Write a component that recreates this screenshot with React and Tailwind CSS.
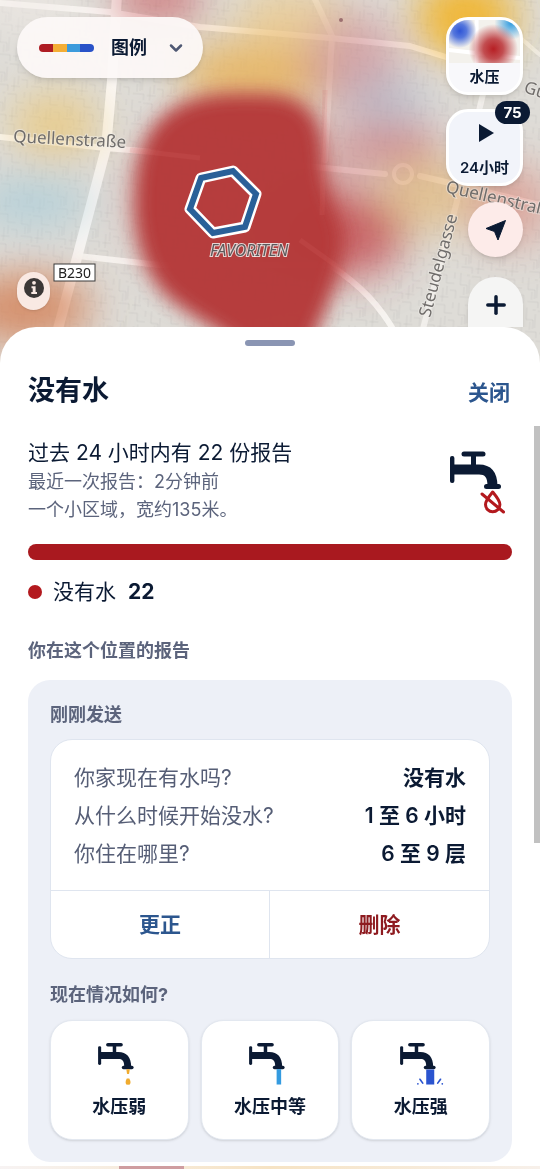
import React from 'react';
import { ChevronDown, Plus } from 'lucide-react';

const ANSWERS = [
  { question: '你家现在有水吗?', answer: '没有水' },
  { question: '从什么时候开始没水?', answer: '1 至 6 小时' },
  { question: '你住在哪里?', answer: '6 至 9 层' },
];

const PRESSURES = [
  { level: 'weak', label: '水压弱' },
  { level: 'medium', label: '水压中等' },
  { level: 'strong', label: '水压强' },
];

/**
 * Water tap with the flow that matches the reported level.
 *
 * @param {string} level - 'none', 'weak', 'medium' or 'strong'
 */
function TapIcon({ level, className }) {
  return (
    <svg viewBox="0 0 64 66" className={className} aria-hidden="true">
      <g fill="#0b1a33">
        <rect x="2" y="6" width="4.4" height="27" rx="2" />
        <rect x="13.5" y="1.5" width="24" height="5" rx="2.5" />
        <rect x="23" y="5" width="5" height="11" />
        <path d="M5 14.5H31C43 14.5 49.5 22 49.5 36H39.5C39.5 27 37 24.5 31 24.5H5Z" />
        <rect x="36" y="34" width="17" height="5" rx="2.5" />
      </g>
      {level === 'none' && (
        <g fill="none" stroke="#b3191e" strokeWidth="3" strokeLinecap="round" strokeLinejoin="round">
          <path d="M44.7 42C41 46.5 37.5 50.5 37.5 54.5a7.2 7.2 0 0 0 14.4 0C51.9 50.5 48.4 46.5 44.7 42Z" />
          <path d="M34 44L55.5 62" />
        </g>
      )}
      {level === 'weak' && (
        <g fill="#f0ab2e">
          <path d="M42.5 39h5l-1 6.5q-1.5 1-3 0Z" />
          <path d="M43.2 52.5h3.6q1.7 3 1.700 5.800q0 3.200-3.500 3.200t-3.500-3.200q0-2.800 1.700-5.800Z" />
        </g>
      )}
      {level === 'medium' && <rect x="41.5" y="39" width="6.5" height="22" fill="#349be0" />}
      {level === 'strong' && (
        <g fill="#2b54cf" stroke="#2b54cf" strokeLinecap="round">
          <rect x="39.5" y="39.5" width="11.5" height="21.5" stroke="none" />
          <path d="M30.5 53.5l4 5.5M60 53.5l-4 5.5M27.5 60h.1M62.5 60h.1" strokeWidth="2.4" />
        </g>
      )}
    </svg>
  );
}

function HeatMap() {
  return (
    <svg
      viewBox="0 0 540 400"
      preserveAspectRatio="xMidYMin slice"
      className="absolute inset-x-0 top-0 h-[400px] w-full"
      aria-hidden="true"
    >
      <defs>
        <filter id="soft" x="-50%" y="-50%" width="200%" height="200%">
          <feGaussianBlur stdDeviation="20" />
        </filter>
        <filter id="edge" x="-30%" y="-30%" width="160%" height="160%">
          <feGaussianBlur stdDeviation="9" />
        </filter>
        <pattern id="blocks" width="34" height="30" patternUnits="userSpaceOnUse" patternTransform="rotate(4)">
          <path
            d="M3 0v12h7v9M14 3h9v8h8M20 16v14M3 24h11v6M27 18h6v8M9 2h3M17 25h9M31 0v6M7 14v8M12 6v14M24 14v9"
            fill="none"
            stroke="#8d8c86"
            strokeWidth="1"
            opacity="0.14"
          />
        </pattern>
      </defs>

      <rect width="540" height="400" fill="#dedcd7" />
      <rect width="540" height="400" fill="url(#blocks)" />

      <g fill="none" stroke="#faf7f4" strokeLinecap="round" strokeLinejoin="round">
        <path d="M0 3L110 12L200 27L330 38L410 46L446 57" strokeWidth="6" />
        <path d="M117 -5L112 80L106 148L78 254L55 340" strokeWidth="10" />
        <path d="M0 137L106 148L250 160L325 168L385 174" strokeWidth="6" />
        <path d="M420 176L450 183L540 205" strokeWidth="6" />
        <path d="M313 -5L332 36L325 160" strokeWidth="6" opacity="0.7" />
        <path d="M78 256L160 265L330 265C360 285 380 305 397 336" strokeWidth="6" opacity="0.9" />
        <path d="M484 90L456 205L420 340" strokeWidth="6" opacity="0.7" />
        <path d="M500 20L540 55" strokeWidth="4" opacity="0.6" />
        <circle cx="403" cy="174" r="9" strokeWidth="4" />
      </g>

      <g filter="url(#soft)">
        <ellipse cx="158" cy="0" rx="48" ry="22" fill="#c8555c" opacity="0.75" />
        <ellipse cx="30" cy="5" rx="55" ry="28" fill="#efe9e6" opacity="0.7" />
        <ellipse cx="255" cy="75" rx="75" ry="36" fill="#e8b052" opacity="0.8" />
        <ellipse cx="290" cy="15" rx="55" ry="28" fill="#ecc98a" opacity="0.75" />
        <ellipse cx="466" cy="18" rx="50" ry="42" fill="#f1b42c" opacity="0.95" />
        <ellipse cx="352" cy="62" rx="48" ry="50" fill="#cd838a" opacity="0.6" />
        <ellipse cx="388" cy="100" rx="42" ry="22" fill="#a9b3ca" opacity="0.65" />
        <ellipse cx="388" cy="146" rx="55" ry="24" fill="#c9777b" opacity="0.75" />
        <ellipse cx="430" cy="195" rx="50" ry="36" fill="#e4b670" opacity="0.65" />
        <ellipse cx="510" cy="205" rx="42" ry="42" fill="#d98376" opacity="0.6" />
        <ellipse cx="55" cy="125" rx="45" ry="34" fill="#edc56a" opacity="0.65" />
        <ellipse cx="32" cy="202" rx="60" ry="26" fill="#aaccd8" opacity="0.75" />
        <ellipse cx="26" cy="308" rx="66" ry="36" fill="#d3835b" opacity="0.85" />
        <ellipse cx="240" cy="200" rx="115" ry="100" fill="#cf8a88" opacity="0.5" />
        <ellipse cx="340" cy="235" rx="66" ry="44" fill="#c24145" opacity="0.75" />
      </g>
      <path
        d="M136 180C140 130 168 94 235 94H262C308 94 322 118 324 155C324 200 348 220 343 250C337 285 325 315 308 350H245C225 332 190 318 165 294C138 264 132 222 136 180Z"
        fill="#b53b3a"
        opacity="0.98"
        filter="url(#edge)"
      />
      <g fill="none" stroke="#dd6e6a" strokeWidth="5" opacity="0.14">
        <path d="M130 150L200 158" />
        <path d="M325 90L322 215" />
        <path d="M300 240L345 272" />
      </g>

      <g fill="none" strokeLinejoin="round">
        <path d="M201 178L233 171L256 194L245 227L213 233L190 209Z" stroke="#fff" strokeWidth="11" />
        <path d="M201 178L233 171L256 194L245 227L213 233L190 209Z" stroke="#2a6098" strokeWidth="6" strokeLinejoin="miter" />
      </g>

      <g fontFamily="'Noto Sans', sans-serif" fill="#706d6b" stroke="#f1efec" strokeOpacity="0.5" strokeWidth="2" paintOrder="stroke">
        <text x="13" y="142" fontSize="17" transform="rotate(3 13 142)">Quellenstraße</text>
        <text x="445" y="192" fontSize="17" transform="rotate(13 445 192)">Quellenstraße</text>
        <text x="430" y="318" fontSize="17" transform="rotate(-75 430 318)">Steudelgasse</text>
        <text x="523" y="92" fontSize="17" transform="rotate(18 523 92)">Gu</text>
        <text x="210" y="256" fontSize="16" fontStyle="italic" fill="#5d5a5c" strokeOpacity="0.85">FAVORITEN</text>
      </g>
      <circle cx="341" cy="20" r="2" fill="#9c7070" />
      <rect x="54" y="264" width="41" height="17" fill="#fff" stroke="#3a3a3a" />
      <text x="74.5" y="278" fontSize="14" textAnchor="middle" fontFamily="'Noto Sans', sans-serif" fill="#222">
        B230
      </text>
    </svg>
  );
}

function LayerPreview() {
  return (
    <svg viewBox="0 0 72 43" preserveAspectRatio="none" className="h-[43px] w-full" aria-hidden="true">
      <defs>
        <radialGradient id="previewRed">
          <stop offset="0" stopColor="#b71f24" />
          <stop offset="0.4" stopColor="#c24d50" />
          <stop offset="1" stopColor="#c24d50" stopOpacity="0" />
        </radialGradient>
        <radialGradient id="previewBlue">
          <stop offset="0" stopColor="#2f55d6" />
          <stop offset="0.4" stopColor="#5577dd" />
          <stop offset="1" stopColor="#5577dd" stopOpacity="0" />
        </radialGradient>
        <radialGradient id="previewSky">
          <stop offset="0" stopColor="#2f9be0" />
          <stop offset="1" stopColor="#2f9be0" stopOpacity="0" />
        </radialGradient>
      </defs>
      <rect width="72" height="43" fill="#f3f1ec" />
      <path d="M28 0V43M0 30L72 38" stroke="#fff" strokeWidth="4" />
      <circle cx="11" cy="11" r="17" fill="url(#previewBlue)" />
      <circle cx="63" cy="3" r="17" fill="url(#previewSky)" />
      <circle cx="45" cy="29" r="25" fill="url(#previewRed)" />
    </svg>
  );
}

function MapControls() {
  return (
    <div className="relative flex h-[327px] items-start justify-between overflow-hidden px-[17px] pt-[17px]">
      <div className="flex h-[293px] flex-col items-start justify-between">
        <button
          type="button"
          className="flex h-[61px] items-center rounded-full bg-[#fcf8f7]/95 pr-[17px] pl-[22px] text-lg font-bold shadow-md"
        >
          <span className="mr-[17px] flex h-2 w-[55px] overflow-hidden rounded-full">
            <span className="flex-1 bg-[#ae1c23]" />
            <span className="flex-1 bg-[#f4ae35]" />
            <span className="flex-1 bg-[#3c9bdc]" />
            <span className="flex-1 bg-[#2952c8]" />
          </span>
          图例
          <ChevronDown className="ml-[19px] size-5 text-[#4f5873]" strokeWidth={3} />
        </button>
        <button
          type="button"
          aria-label="信息"
          className="flex h-[38px] w-[33px] items-start justify-center rounded-full bg-[#f9e9e3] pt-[6px] shadow"
        >
          <svg viewBox="0 0 20 20" className="size-5" aria-hidden="true">
            <circle cx="10" cy="10" r="10" fill="#3b3736" />
            <circle cx="10" cy="4.8" r="1.9" fill="#f9e9e3" />
            <path d="M7.5 8.2H11.6V14H13V16H7.3V14H8.7V10.2H7.5Z" fill="#f9e9e3" />
          </svg>
        </button>
      </div>

      <div className="flex shrink-0 flex-col items-end">
        <button
          type="button"
          className="flex h-[78px] w-[77px] flex-col items-center overflow-hidden rounded-[22px] border-[3px] border-white bg-[#f8f8fb] text-[15px] leading-[27px] font-bold shadow-md"
        >
          <LayerPreview />
          水压
        </button>
        <button
          type="button"
          className="relative mt-[14px] flex h-[77px] w-[77px] flex-col items-center justify-between rounded-[22px] border-[3px] border-white bg-[#f2f4fa] pt-3 pb-[5px] text-[15px] leading-5 font-semibold shadow-md"
        >
          <svg viewBox="0 0 16 18" className="ml-1 h-[18px] w-4" aria-hidden="true">
            <path d="M0 0L15 9L0 18Z" fill="#0b1a33" />
          </svg>
          24小时
          <span className="absolute -top-[11px] -right-[10px] flex h-[23px] w-[35px] items-center justify-center rounded-full bg-[#0b1a33] text-[15px] font-bold text-white">
            75
          </span>
        </button>
        <button
          type="button"
          aria-label="定位"
          className="mt-4 flex size-[55px] items-center justify-center rounded-full bg-[#fdebe9] shadow-md"
        >
          <svg viewBox="0 0 20 20" className="size-5" aria-hidden="true">
            <path d="M19.5 .5L12 20L8.5 11.5L0 8.5Z" fill="#0b1a33" stroke="#0b1a33" strokeLinejoin="round" />
          </svg>
        </button>
        <button
          type="button"
          aria-label="放大"
          className="mt-5 flex h-[110px] w-[55px] items-start justify-center rounded-full bg-[#f5f5f4] pt-[14px] shadow-md"
        >
          <Plus className="size-7" strokeWidth={3} />
        </button>
      </div>
    </div>
  );
}

function OwnReport() {
  return (
    <div className="overflow-hidden rounded-[22px] border border-[#dfe5ef] bg-white">
      <dl className="flex flex-col gap-[9px] px-[23px] pt-[23px] pb-[22px] text-[21px] leading-[29px]">
        {ANSWERS.map((item) => (
          <div key={item.question} className="flex justify-between">
            <dt className="text-[#565e76]">{item.question}</dt>
            <dd className="font-semibold">{item.answer}</dd>
          </div>
        ))}
      </dl>
      <div className="grid grid-cols-2 divide-x divide-[#dfe5ef] border-t border-[#dfe5ef] text-[21px] font-bold">
        <button type="button" className="h-[67px] text-[#2c568e]">更正</button>
        <button type="button" className="h-[67px] text-[#8e1b20]">删除</button>
      </div>
    </div>
  );
}

function App() {
  return (
    <div className="relative flex min-h-screen flex-col overflow-hidden bg-white font-[Inter,'Noto_Sans_CJK_SC',sans-serif] text-[#0b1a33]">
      <HeatMap />
      <MapControls />

      <main className="relative rounded-t-[36px] bg-white px-7 pt-[13px] pb-1">
        <div className="mx-auto h-[6px] w-[50px] rounded-full bg-[#8a95b3]" />
        <div className="absolute top-[99px] right-0 h-[417px] w-[6px] bg-[#c1c1c1]" />

        <header className="mt-[25px] flex items-center justify-between">
          <h1 className="text-[27px] leading-10 font-bold">没有水</h1>
          <button type="button" className="mr-[2px] pt-1 text-[21px] font-bold text-[#2c568e]">关闭</button>
        </header>

        <section className="mt-[27px] flex justify-between">
          <div className="text-lg leading-7 text-[#5c647c]">
            <p className="text-[21px] leading-[30px] text-[#0b1a33]">过去 24 小时内有 22 份报告</p>
            <p>最近一次报告：2分钟前</p>
            <p>一个小区域，宽约135米。</p>
          </div>
          <TapIcon level="none" className="mt-3 h-[66px] w-16 shrink-0" />
        </section>

        <div className="mt-5 h-4 rounded-full bg-[#a9191f]" />
        <p className="mt-4 flex items-center text-[21px] leading-8">
          <span className="mr-[11px] size-[14px] rounded-full bg-[#b3191e]" />
          没有水
          <strong className="ml-3 font-bold">22</strong>
        </p>

        <h2 className="mt-[29px] text-lg leading-7 font-bold text-[#5c647c]">你在这个位置的报告</h2>
        <section className="mt-[15px] rounded-[22px] bg-[#edf0f7] px-[22px] pt-[21px] pb-[22px]">
          <h3 className="mb-[10px] text-lg leading-7 font-bold text-[#5c647c]">刚刚发送</h3>
          <OwnReport />
          <h3 className="mt-[22px] mb-[11px] text-lg leading-7 font-bold text-[#5c647c]">现在情况如何?</h3>
          <div className="grid grid-cols-3 gap-3">
            {PRESSURES.map((item) => (
              <button
                key={item.level}
                type="button"
                className="flex h-[120px] flex-col items-center rounded-[22px] border border-[#e3e8f0] bg-white pt-[21px] text-lg leading-7 font-bold shadow-sm"
              >
                <TapIcon level={item.level} className="mb-[5px] h-[46px] w-[46px]" />
                {item.label}
              </button>
            ))}
          </div>
        </section>
      </main>
      <div className="relative mt-auto h-[3px] bg-linear-to-r from-[#f7f3f3] via-[#f6e3c4] to-[#f7f0ea]">
        <div className="ml-[22%] h-full w-[12%] bg-[#cf9da0]" />
      </div>
    </div>
  );
}

export default App;
